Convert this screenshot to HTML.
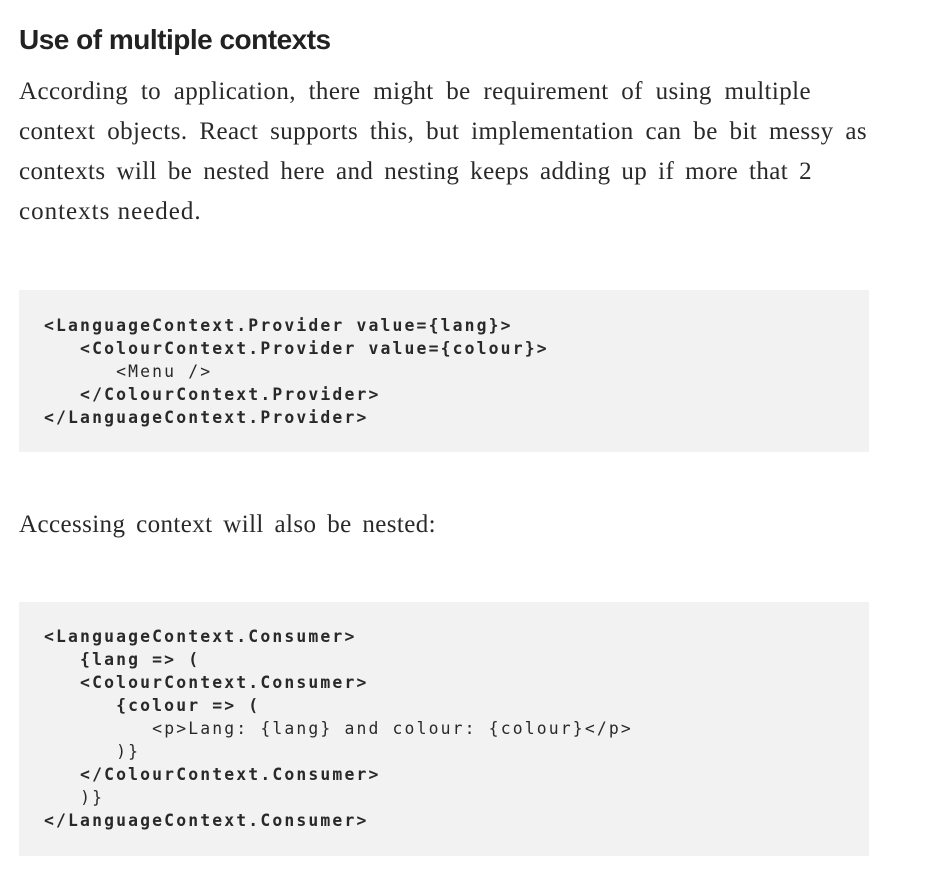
<!DOCTYPE html>
<html><head><meta charset="utf-8"><style>
body{margin:0;background:#fff;width:950px;height:881px;overflow:hidden}
h2{position:absolute;left:19px;top:22px;margin:0;font:bold 28px/36px "Liberation Sans",sans-serif;letter-spacing:-0.5px;color:#222}
.p{position:absolute;left:19px;margin:0;font:25px/40px "Liberation Serif",serif;color:#292929;letter-spacing:0.4px}
.p div{white-space:nowrap}
.j{text-align:justify;text-align-last:justify}
pre{position:absolute;left:19px;width:850px;margin:0;background:#f2f2f2;box-sizing:border-box;padding:0 0 0 25px;font:bold 16.4px/23px "DejaVu Sans Mono",monospace;letter-spacing:2.15px;color:#292929}
.r{font-weight:normal}
</style></head><body>
<h2>Use of multiple contexts</h2>
<div class="p" style="top:72px">
<div class="j" style="width:792px">According to application, there might be requirement of using multiple</div>
<div class="j" style="width:848px">context objects. React supports this, but implementation can be bit messy as</div>
<div class="j" style="width:793px">contexts will be nested here and nesting keeps adding up if more that 2</div>
<div style="letter-spacing:1px">contexts needed.</div>
</div>
<pre style="top:290px;height:162px;padding-top:24px">&lt;LanguageContext.Provider value={lang}&gt;
   &lt;ColourContext.Provider value={colour}&gt;
      <span class="r">&lt;Menu /&gt;</span>
   &lt;/ColourContext.Provider&gt;
&lt;/LanguageContext.Provider&gt;</pre>
<div class="p" style="top:505px"><div class="j" style="width:417px">Accessing context will also be nested:</div></div>
<pre style="top:602px;height:254px;padding-top:23px">&lt;LanguageContext.Consumer&gt;
   {lang =&gt; (
   &lt;ColourContext.Consumer&gt;
      {colour =&gt; (
         <span class="r">&lt;p&gt;Lang: {lang} and colour: {colour}&lt;/p&gt;</span>
      <span class="r">)}</span>
   &lt;/ColourContext.Consumer&gt;
   <span class="r">)}</span>
&lt;/LanguageContext.Consumer&gt;</pre>
</body></html>
